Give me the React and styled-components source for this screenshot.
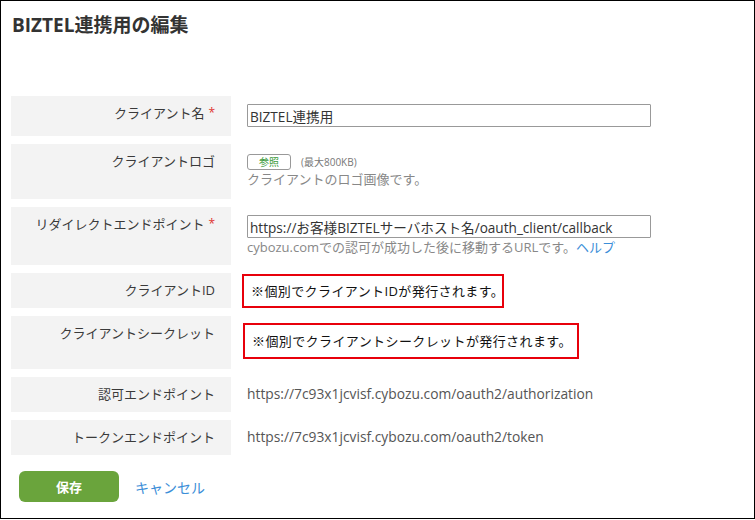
import React from 'react';
import styled, { createGlobalStyle } from 'styled-components';

const GlobalStyle = createGlobalStyle`
  html, body {
    margin: 0;
    padding: 0;
    background: #fff;
  }
  body {
    font-family: "Open Sans", "Noto Sans CJK JP", sans-serif;
    color: #333;
  }
`;

const Frame = styled.div`
  box-sizing: border-box;
  width: 755px;
  height: 519px;
  border: 1px solid #000;
  padding: 12px 0 0 10px;
`;

const Title = styled.h1`
  margin: 0 0 59px 1px;
  font-size: 19px;
  line-height: 24px;
  font-weight: bold;
  color: #333;
`;

const Form = styled.div`
  display: flex;
  flex-direction: column;
  gap: 8px;
`;

const Row = styled.div`
  display: flex;
  height: ${(props) => props.h}px;
`;

const Label = styled.div`
  box-sizing: border-box;
  width: 220px;
  flex: none;
  background: #f3f3f3;
  text-align: right;
  padding: 8px 16px 0 0;
  font-size: 13px;
  line-height: 18px;
  color: #3a3a3a;
`;

const Required = styled.span`
  color: #e0322f;
  font-size: 12px;
  margin-left: 4px;
  vertical-align: 1px;
`;

const Value = styled.div`
  flex: 1;
  display: flex;
  flex-direction: column;
  align-items: flex-start;
  padding: ${(props) => props.top || 0}px 0 0 16px;
  font-size: 13px;
  line-height: 18px;
`;

const TextInput = styled.input`
  box-sizing: border-box;
  width: 404px;
  height: 23px;
  margin: 0;
  padding: 0 2px;
  border: 1px solid #999;
  border-radius: 1px;
  font-family: inherit;
  font-size: 13.6px;
  color: #333;
  background: #fff;
`;

const FileLine = styled.div`
  display: flex;
  align-items: center;
  gap: 10px;
  height: 16px;
`;

const BrowseButton = styled.button`
  box-sizing: border-box;
  width: 44px;
  height: 16px;
  padding: 0;
  border: 1px solid #999;
  border-radius: 3px;
  background: #fff;
  color: #3a9a3a;
  font-family: inherit;
  font-size: 10px;
  line-height: 14px;
`;

const Small = styled.span`
  font-size: 10px;
  color: #777;
`;

const Help = styled.div`
  color: #888;
  font-size: 13px;
  line-height: 18px;
  white-space: nowrap;
`;

const Link = styled.a`
  color: #3b8ed8;
  text-decoration: none;
`;

const Notice = styled.div`
  box-sizing: border-box;
  margin-left: ${(props) => props.shift}px;
  width: ${(props) => props.w}px;
  height: ${(props) => props.h}px;
  border: 2px solid #e8000b;
  display: flex;
  align-items: center;
  padding-left: 7px;
  font-size: 13px;
  letter-spacing: 0.4px;
  white-space: nowrap;
  color: #111;
`;

const Plain = styled.div`
  color: #555;
  font-size: 13.8px;
  line-height: 18px;
  white-space: nowrap;
`;

const Actions = styled.div`
  display: flex;
  align-items: center;
  gap: 16px;
  margin: 16px 0 0 8px;
`;

const SaveButton = styled.button`
  width: 100px;
  height: 31px;
  border: none;
  border-radius: 6px;
  background: #6aa43c;
  color: #fff;
  font-family: inherit;
  font-size: 13px;
  font-weight: bold;
`;

const CancelLink = styled.a`
  color: #3b8ed8;
  font-size: 14px;
  text-decoration: none;
`;

export default function App() {
  return (
    <>
      <GlobalStyle />
      <Frame>
        <Title>BIZTEL連携用の編集</Title>
        <Form>
          <Row h={40}>
            <Label>
              クライアント名<Required>*</Required>
            </Label>
            <Value top={8}>
              <TextInput defaultValue="BIZTEL連携用" />
            </Value>
          </Row>
          <Row h={55}>
            <Label>クライアントロゴ</Label>
            <Value top={10}>
              <FileLine>
                <BrowseButton>参照</BrowseButton>
                <Small>(最大800KB)</Small>
              </FileLine>
              <Help>クライアントのロゴ画像です。</Help>
            </Value>
          </Row>
          <Row h={58}>
            <Label>
              リダイレクトエンドポイント<Required>*</Required>
            </Label>
            <Value top={8}>
              <TextInput defaultValue="https://お客様BIZTELサーバホスト名/oauth_client/callback" />
              <Help>
                cybozu.comでの認可が成功した後に移動するURLです。<Link href="#">ヘルプ</Link>
              </Help>
            </Value>
          </Row>
          <Row h={35}>
            <Label>クライアントID</Label>
            <Value top={1}>
              <Notice shift={-5} w={262} h={34}>
                ※個別でクライアントIDが発行されます。
              </Notice>
            </Value>
          </Row>
          <Row h={53}>
            <Label>クライアントシークレット</Label>
            <Value top={7}>
              <Notice shift={-4} w={336} h={36}>
                ※個別でクライアントシークレットが発行されます。
              </Notice>
            </Value>
          </Row>
          <Row h={35}>
            <Label>認可エンドポイント</Label>
            <Value top={8}>
              <Plain>https://7c93x1jcvisf.cybozu.com/oauth2/authorization</Plain>
            </Value>
          </Row>
          <Row h={35}>
            <Label>トークンエンドポイント</Label>
            <Value top={8}>
              <Plain>https://7c93x1jcvisf.cybozu.com/oauth2/token</Plain>
            </Value>
          </Row>
        </Form>
        <Actions>
          <SaveButton>保存</SaveButton>
          <CancelLink href="#">キャンセル</CancelLink>
        </Actions>
      </Frame>
    </>
  );
}
